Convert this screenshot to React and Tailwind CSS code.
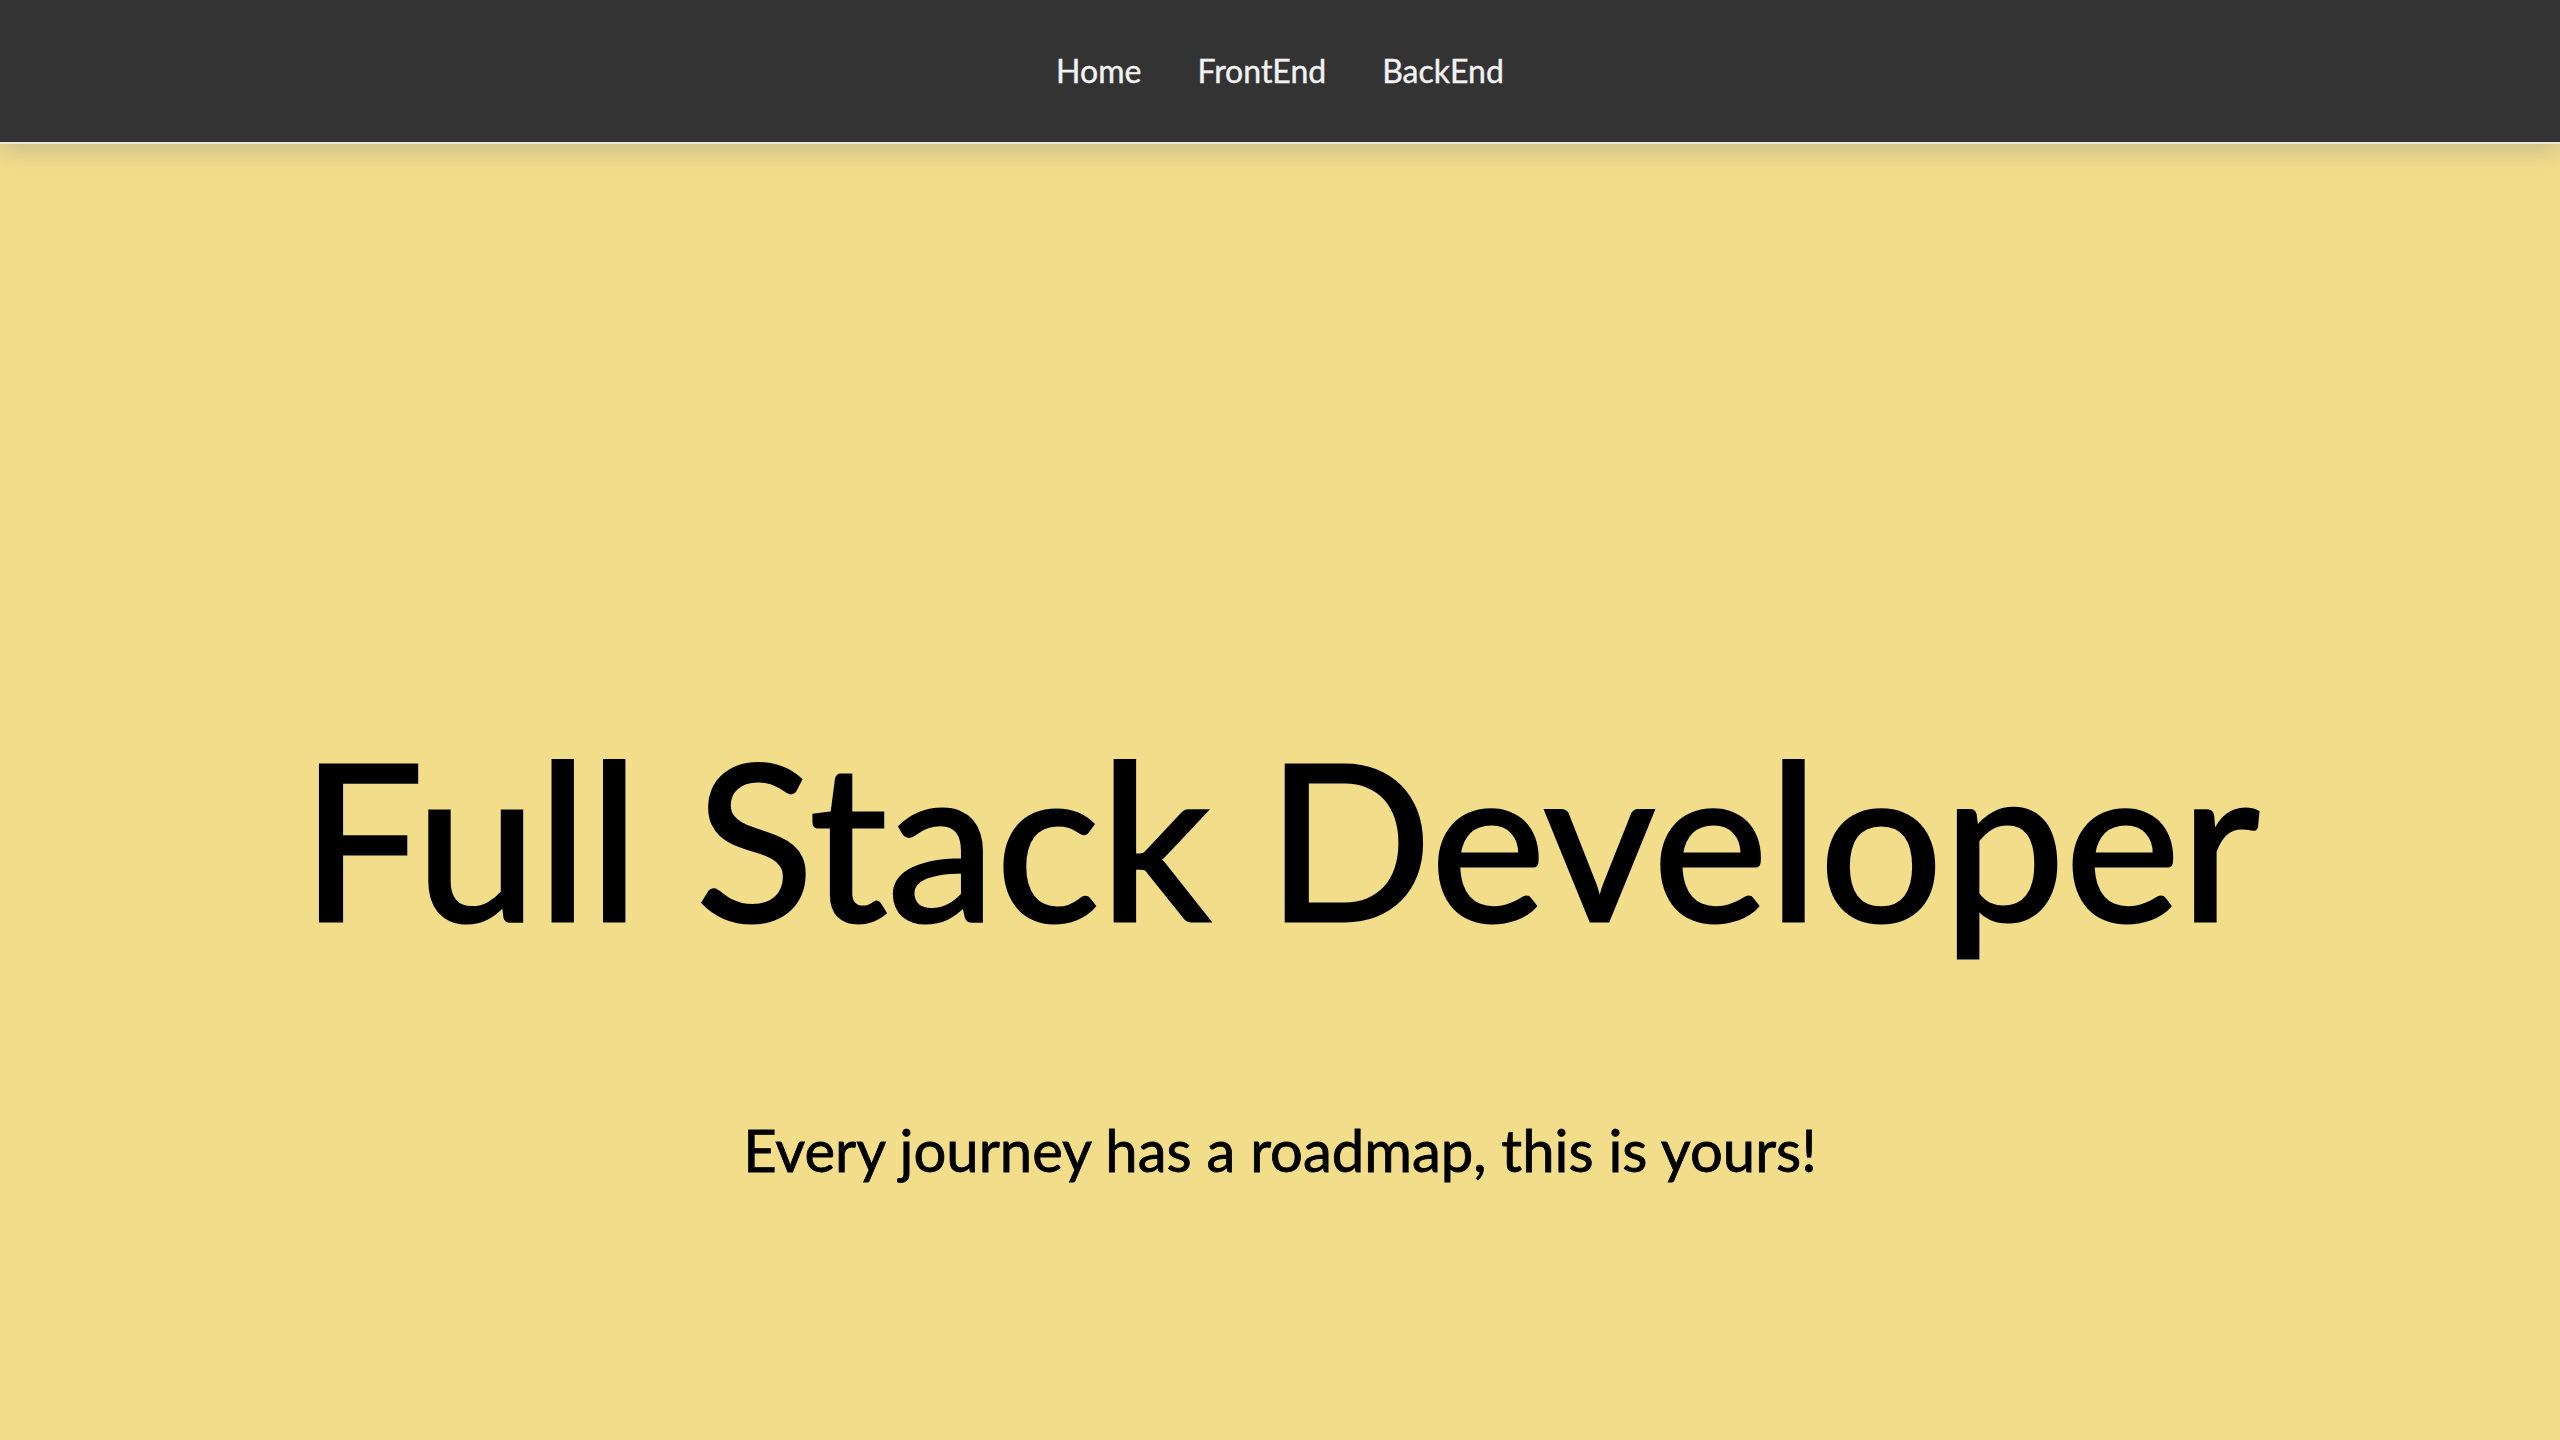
import React from 'react';

const links = ['Home', 'FrontEnd', 'BackEnd'];

const App = () => {
  return (
    <div className="min-h-screen bg-[#f2de8a] font-['Lato',sans-serif]">
      <nav className="relative z-10 h-[144px] bg-[#333333] border-b-2 border-[#ebe6d6] flex items-center justify-center gap-[56px] shadow-[0_8px_22px_rgba(170,160,150,0.5)]">
        {links.map((link) => (
          <a key={link} href="#" className="text-[32px] leading-none text-[#f2f2f2] [-webkit-text-stroke:0.4px_#f2f2f2]">
            {link}
          </a>
        ))}
      </nav>
      <main className="flex flex-col items-center pt-[584px]">
        <h1 className="text-[218px] leading-none text-black [-webkit-text-stroke:3px_#000]">
          Full Stack Developer
        </h1>
        <p className="mt-[175px] text-[58px] leading-none text-black [-webkit-text-stroke:0.8px_#000]">
          Every journey has a roadmap, this is yours!
        </p>
      </main>
    </div>
  );
};

export default App;
